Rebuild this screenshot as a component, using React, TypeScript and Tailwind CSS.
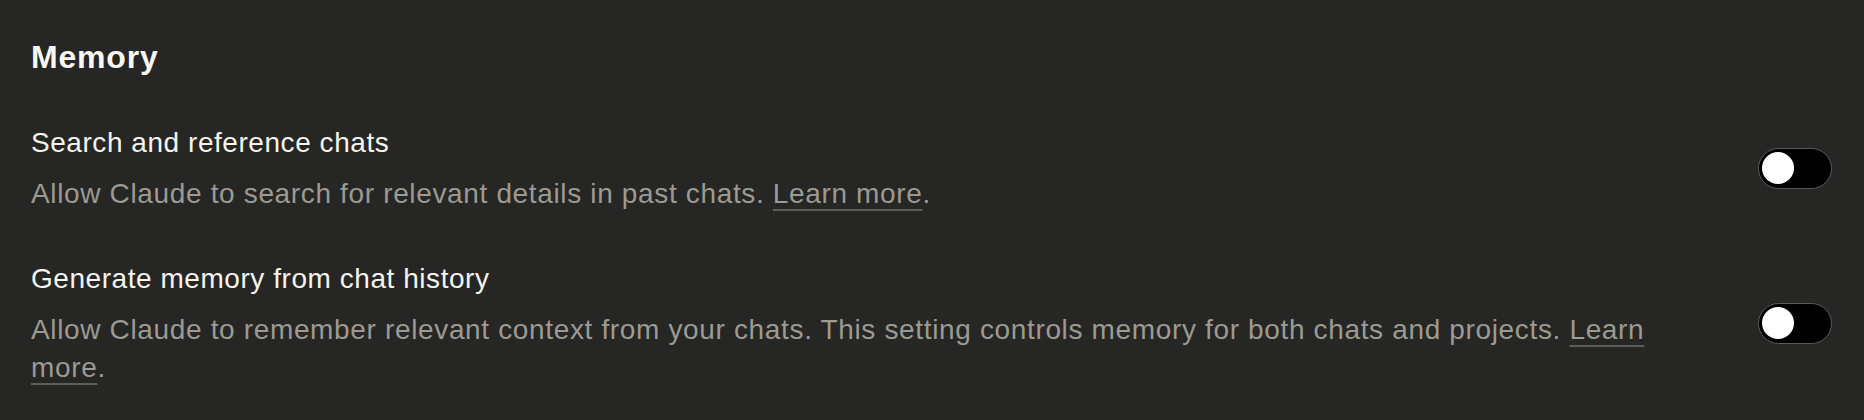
import React from "react";

function Toggle() {
  return (
    <button
      type="button"
      role="switch"
      aria-checked="false"
      className="relative shrink-0 w-[74px] h-[41px] rounded-full bg-black border-[1.5px] border-[#5c5b57]"
    >
      <span className="absolute left-[3px] top-[3px] w-[32px] h-[32px] rounded-full bg-white" />
    </button>
  );
}

function LearnMore() {
  return (
    <a
      href="#"
      className="underline decoration-[#5e5d59] decoration-2 underline-offset-[6px]"
    >
      Learn more
    </a>
  );
}

function SettingRow({ title, children }: { title: string; children: React.ReactNode }) {
  return (
    <div className="flex items-center gap-[60px]">
      <div className="flex-1 min-w-0">
        <div className="text-[28px] leading-[38px] tracking-[0.55px] text-[#f5f4ef]">{title}</div>
        <p className="mt-[13px] text-[28px] leading-[38px] tracking-[0.65px] text-[#9c9a93]">{children}</p>
      </div>
      <Toggle />
    </div>
  );
}

export default function App() {
  return (
    <div
      className="min-h-screen bg-[#262624] pl-[31px] pr-[32px] pt-[37px]"
      style={{ fontFamily: '"Liberation Sans", Arial, sans-serif' }}
    >
      <h2 className="text-[32px] leading-[40px] font-semibold tracking-[0.8px] text-[#f8f7f2]">Memory</h2>
      <div className="mt-[47px] flex flex-col gap-[47px]">
        <SettingRow title="Search and reference chats">
          Allow Claude to search for relevant details in past chats. <LearnMore />.
        </SettingRow>
        <SettingRow title="Generate memory from chat history">
          Allow Claude to remember relevant context from your chats. This setting controls memory for both
          chats and projects. <LearnMore />.
        </SettingRow>
      </div>
    </div>
  );
}
